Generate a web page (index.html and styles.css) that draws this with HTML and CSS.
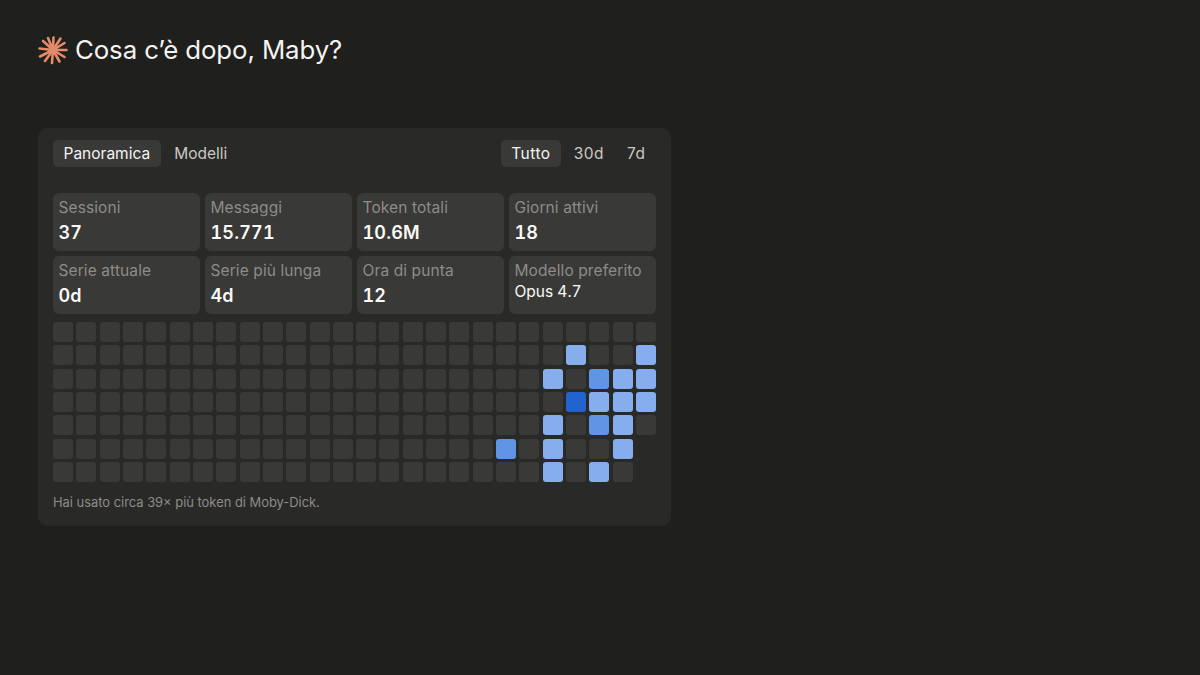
FILE: index.html
```html
<!DOCTYPE html>
<html lang="it">
<head>
    <meta charset="UTF-8">
    <meta name="viewport" content="width=device-width, initial-scale=1.0">
    <title>Cosa c'è dopo, Maby?</title>
    <link rel="stylesheet" href="styles.css">
</head>
<body>
    <div class="greeting">
        <svg class="spark" viewBox="0 0 30 30" width="30" height="30" aria-hidden="true">
            <g stroke="#e58b6b" stroke-width="2.6" stroke-linecap="round">
                <line x1="15" y1="15" x2="15.5" y2="2.5"/>
                <line x1="15" y1="15" x2="22.5" y2="3.5"/>
                <line x1="15" y1="15" x2="26.5" y2="8"/>
                <line x1="15" y1="15" x2="28.5" y2="15"/>
                <line x1="15" y1="15" x2="26.5" y2="22"/>
                <line x1="15" y1="15" x2="21.5" y2="26.5"/>
                <line x1="15" y1="15" x2="14" y2="28"/>
                <line x1="15" y1="15" x2="7" y2="26"/>
                <line x1="15" y1="15" x2="2" y2="21.5"/>
                <line x1="15" y1="15" x2="1.5" y2="13.5"/>
                <line x1="15" y1="15" x2="5" y2="6"/>
                <line x1="15" y1="15" x2="10" y2="3"/>
            </g>
        </svg>
        <h1>Cosa c’è dopo, Maby?</h1>
    </div>

    <div class="card">
        <div class="tabs-row">
            <div class="tabs">
                <span class="tab active">Panoramica</span>
                <span class="tab">Modelli</span>
            </div>
            <div class="tabs range">
                <span class="tab active">Tutto</span>
                <span class="tab">30d</span>
                <span class="tab">7d</span>
            </div>
        </div>

        <div class="stats">
            <div class="stat"><div class="stat-label">Sessioni</div><div class="stat-value">37</div></div>
            <div class="stat"><div class="stat-label">Messaggi</div><div class="stat-value">15.771</div></div>
            <div class="stat"><div class="stat-label">Token totali</div><div class="stat-value">10.6M</div></div>
            <div class="stat"><div class="stat-label">Giorni attivi</div><div class="stat-value">18</div></div>
            <div class="stat"><div class="stat-label">Serie attuale</div><div class="stat-value">0d</div></div>
            <div class="stat"><div class="stat-label">Serie più lunga</div><div class="stat-value">4d</div></div>
            <div class="stat"><div class="stat-label">Ora di punta</div><div class="stat-value">12</div></div>
            <div class="stat"><div class="stat-label">Modello preferito</div><div class="stat-value model">Opus 4.7</div></div>
        </div>

        <div class="heatmap">
            <!-- riga 1 -->
            <i></i><i></i><i></i><i></i><i></i><i></i><i></i><i></i><i></i><i></i><i></i><i></i><i></i>
            <i></i><i></i><i></i><i></i><i></i><i></i><i></i><i></i><i></i><i></i><i></i><i></i><i></i>
            <!-- riga 2 -->
            <i></i><i></i><i></i><i></i><i></i><i></i><i></i><i></i><i></i><i></i><i></i><i></i><i></i>
            <i></i><i></i><i></i><i></i><i></i><i></i><i></i><i></i><i></i><i class="l1"></i><i></i><i></i><i class="l1"></i>
            <!-- riga 3 -->
            <i></i><i></i><i></i><i></i><i></i><i></i><i></i><i></i><i></i><i></i><i></i><i></i><i></i>
            <i></i><i></i><i></i><i></i><i></i><i></i><i></i><i></i><i class="l1"></i><i></i><i class="l2"></i><i class="l1"></i><i class="l1"></i>
            <!-- riga 4 -->
            <i></i><i></i><i></i><i></i><i></i><i></i><i></i><i></i><i></i><i></i><i></i><i></i><i></i>
            <i></i><i></i><i></i><i></i><i></i><i></i><i></i><i></i><i></i><i class="l3"></i><i class="l1"></i><i class="l1"></i><i class="l1"></i>
            <!-- riga 5 -->
            <i></i><i></i><i></i><i></i><i></i><i></i><i></i><i></i><i></i><i></i><i></i><i></i><i></i>
            <i></i><i></i><i></i><i></i><i></i><i></i><i></i><i></i><i class="l1"></i><i></i><i class="l2"></i><i class="l1"></i><i></i>
            <!-- riga 6 -->
            <i></i><i></i><i></i><i></i><i></i><i></i><i></i><i></i><i></i><i></i><i></i><i></i><i></i>
            <i></i><i></i><i></i><i></i><i></i><i></i><i class="l2"></i><i></i><i class="l1"></i><i></i><i></i><i class="l1"></i><i class="none"></i>
            <!-- riga 7 -->
            <i></i><i></i><i></i><i></i><i></i><i></i><i></i><i></i><i></i><i></i><i></i><i></i><i></i>
            <i></i><i></i><i></i><i></i><i></i><i></i><i></i><i></i><i class="l1"></i><i></i><i class="l1"></i><i></i><i class="none"></i>
        </div>

        <p class="note">Hai usato circa 39× più token di Moby-Dick.</p>
    </div>
</body>
</html>
```

FILE: styles.css
```css
body {
    margin: 0;
    padding: 33px 38px 0;
    background-color: #1f1f1e;
    color: #f5f4f0;
    font-family: Inter, "Liberation Sans", sans-serif;
}
.greeting {
    display: flex;
    align-items: center;
    gap: 7px;
    height: 32px;
}
.greeting h1 {
    margin: 0;
    font-size: 25.8px;
    font-weight: 400;
    letter-spacing: -0.1px;
}
.spark {
    flex: none;
    margin-top: 2px;
}
.card {
    width: 603px;
    height: 372px;
    margin-top: 63px;
    padding: 12px 15px 14px;
    background: #292928;
    border-radius: 10px;
}
.tabs-row {
    display: flex;
    justify-content: space-between;
    margin-bottom: 26px;
}
.tabs {
    display: flex;
    gap: 3px;
}
.tabs.range {
    gap: 2px;
}
.tab {
    padding: 0 10.5px;
    height: 27px;
    line-height: 27px;
    border-radius: 5px;
    font-size: 15.5px;
    color: #c9c8c3;
}
.range .tab {
    letter-spacing: 0.5px;
}
.tab.active {
    background: #393938;
    color: #f5f4f0;
}
.stats {
    display: grid;
    grid-template-columns: repeat(4, 1fr);
    grid-auto-rows: 58px;
    gap: 5px;
}
.stat {
    padding: 5px 5.5px;
    background: #393938;
    border-radius: 6px;
}
.stat-label {
    font-size: 15.5px;
    line-height: 20px;
    letter-spacing: 0.1px;
    color: #8d8c87;
}
.stat-value {
    margin-top: 3px;
    font-size: 18px;
    line-height: 24px;
    font-weight: 600;
    font-variant-numeric: tabular-nums;
    letter-spacing: 0.2px;
    color: #faf9f5;
}
.stat-value.model {
    margin-top: 0;
    font-size: 15.5px;
    line-height: 22px;
    font-weight: 400;
    letter-spacing: 0;
}
.heatmap {
    display: grid;
    grid-template-columns: repeat(26, 1fr);
    grid-auto-rows: 20px;
    gap: 3.32px;
    margin-top: 8px;
}
.heatmap i {
    display: block;
    background: #393938;
    border-radius: 3px;
}
.heatmap i.l1 {
    background: #86aeef;
}
.heatmap i.l2 {
    background: #6095e6;
}
.heatmap i.l3 {
    background: #2263d0;
}
.heatmap i.none {
    background: transparent;
}
.note {
    margin: 12px 0 0;
    font-size: 12.9px;
    line-height: 18px;
    color: #8d8c87;
}
```
